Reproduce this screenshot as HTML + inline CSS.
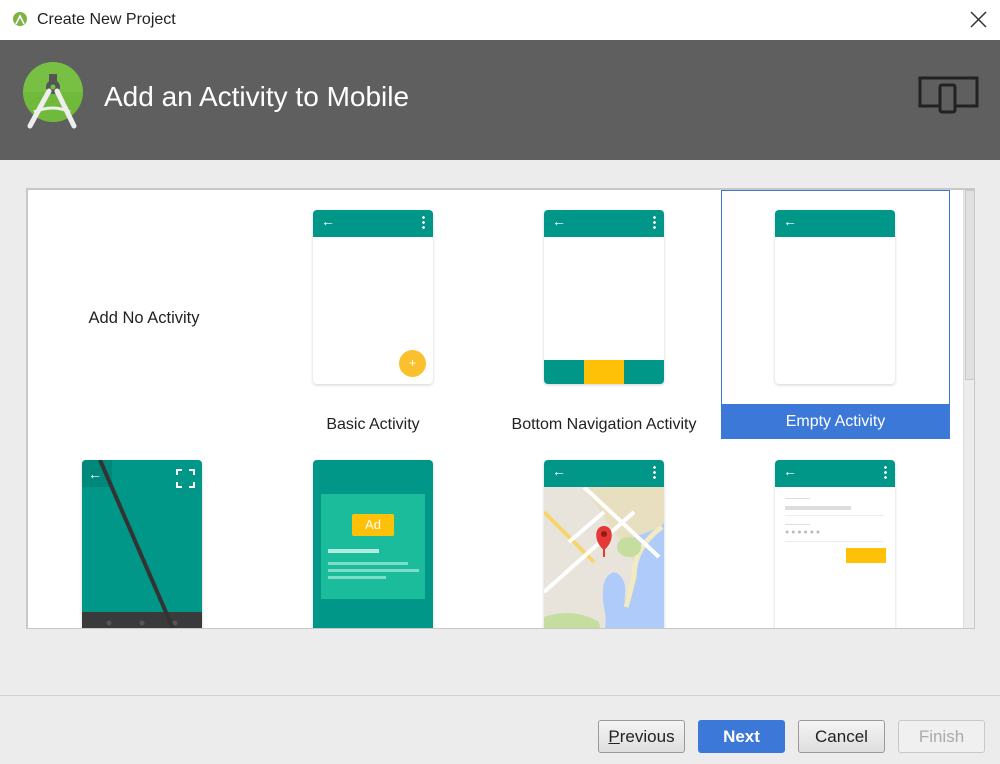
<!DOCTYPE html>
<html><head><meta charset="utf-8"><style>
*{margin:0;padding:0;box-sizing:border-box}
body{width:1000px;height:764px;background:#ececec;font-family:"Liberation Sans",sans-serif;position:relative;overflow:hidden}
.abs{position:absolute}
.title{left:0;top:0;width:1000px;height:40px;background:#fff}
.hdr{left:0;top:40px;width:1000px;height:120px;background:#5f5f5f}
.panel{left:26px;top:188px;width:949px;height:441px;background:#fff;border:2px solid #c8c8c8;border-right-width:1px;border-bottom-width:1px;overflow:hidden}
.ph{position:absolute;width:120px;background:#fff;border-radius:4px;box-shadow:0 1px 3px rgba(0,0,0,.18);overflow:hidden}
.bar{height:27px;background:#009688;position:relative}
.lbl{position:absolute;font-size:16px;color:#222;text-align:center}
.btn{position:absolute;top:720px;height:33px;width:87px;border:1px solid #9a9a9a;border-radius:3px;background:linear-gradient(#f4f4f4,#dedede);font-size:17px;text-align:center;line-height:31px;color:#222}
</style></head><body>
<div class="abs title">
<svg class="abs" style="left:12px;top:11px" width="16" height="16"><circle cx="8" cy="8" r="7" fill="#7cb342"/><path d="M4 13 L8 5 L12 13" stroke="#fff" stroke-width="1.6" fill="none"/></svg>
<div class="abs" style="left:37px;top:11px;font-size:16px;color:#222">Create New Project</div>
<svg class="abs" style="left:970px;top:11px" width="17" height="17"><path d="M1 1L16 16M16 1L1 16" stroke="#333" stroke-width="1.5"/></svg>
</div>
<div class="abs hdr">
<svg class="abs" style="left:20px;top:20px" width="66" height="72">
<circle cx="33" cy="32" r="30" fill="#78c043"/>
<path d="M3 32 A30 30 0 0 0 63 32 Z" fill="#6ab437" opacity=".6"/>
<rect x="29" y="14" width="8" height="8" fill="#555"/>
<circle cx="33" cy="27" r="7" fill="#555"/><circle cx="33" cy="27" r="2.5" fill="#78c043"/>
<path d="M29 31 L10 66 M37 31 L54 66" stroke="#eee" stroke-width="5" stroke-linecap="round"/>
<path d="M14 52 Q33 44 50 52" stroke="#eee" stroke-width="3" fill="none"/>
</svg>
<div class="abs" style="left:104px;top:41px;font-size:28px;color:#fff">Add an Activity to Mobile</div>
<svg class="abs" style="left:918px;top:35px" width="62" height="42"><rect x="2" y="3" width="57" height="28" fill="none" stroke="#222" stroke-width="3"/><rect x="22" y="10" width="15" height="27" rx="2" fill="#5f5f5f" stroke="#222" stroke-width="3"/></svg>
</div>

<div class="abs panel">
<div class="lbl" style="left:36px;top:119px;width:160px;font-size:16.5px">Add No Activity</div>

<div class="ph" style="left:285px;top:20px;height:174px"><div class="bar"><span style="position:absolute;left:8px;top:3px;color:#fff;font-size:14px">←</span><span style="position:absolute;right:8px;top:5px;width:3px;height:14px;background:radial-gradient(circle,#fff 1.3px,transparent 1.5px) 0 0/3px 5px"></span></div>
<div style="position:absolute;left:86px;top:140px;width:27px;height:27px;border-radius:50%;background:#fbc02d;color:#fff;font-size:12px;text-align:center;line-height:27px">+</div></div>
<div class="lbl" style="left:270px;top:226px;width:150px">Basic Activity</div>

<div class="ph" style="left:516px;top:20px;height:174px"><div class="bar"><span style="position:absolute;left:8px;top:3px;color:#fff;font-size:14px">←</span><span style="position:absolute;right:8px;top:5px;width:3px;height:14px;background:radial-gradient(circle,#fff 1.3px,transparent 1.5px) 0 0/3px 5px"></span></div>
<div style="position:absolute;left:0;bottom:0;width:120px;height:24px;background:#009688"></div><div style="position:absolute;left:40px;bottom:0;width:40px;height:24px;background:#ffc107"></div></div>
<div class="lbl" style="left:466px;top:226px;width:220px">Bottom Navigation Activity</div>

<div style="position:absolute;left:693px;top:0;width:229px;height:249px;border:1px solid #3c78d8"></div>
<div style="position:absolute;left:693px;top:214px;width:229px;height:35px;background:#3c78d8;color:#fff;font-size:16px;text-align:center;line-height:35px">Empty Activity</div>
<div class="ph" style="left:747px;top:20px;height:174px"><div class="bar"><span style="position:absolute;left:8px;top:3px;color:#fff;font-size:14px">←</span></div></div>

<div class="ph" style="left:54px;top:270px;height:180px;background:#009688;border-radius:4px 4px 0 0">
<svg width="120" height="180" style="position:absolute;left:0;top:0"><rect x="0" y="0" width="30" height="27" fill="#00897b"/><rect x="0" y="152" width="120" height="28" fill="#3a3a3a"/><circle cx="27" cy="163" r="2.5" fill="#555"/><circle cx="60" cy="163" r="2.5" fill="#555"/><circle cx="93" cy="163" r="2.5" fill="#555"/><path d="M18 0 L96 180" stroke="#333" stroke-width="4"/><text x="6" y="19" fill="#fff" font-size="14">←</text><path d="M95 15v-5h5M107 10h5v5M112 22v5h-5M100 27h-5v-5" stroke="#fff" stroke-width="2" fill="none"/></svg></div>

<div class="ph" style="left:285px;top:270px;height:180px;background:#009688;border-radius:4px 4px 0 0">
<div style="position:absolute;left:8px;top:34px;width:104px;height:105px;background:#1abc9c"></div>
<div style="position:absolute;left:39px;top:54px;width:42px;height:22px;background:#ffc107;color:#fff;font-size:13px;text-align:center;line-height:22px;border-radius:2px">Ad</div>
<div style="position:absolute;left:15px;top:89px;width:51px;height:4px;background:#b2ece0"></div>
<div style="position:absolute;left:15px;top:102px;width:80px;height:3px;background:#7fdcc8"></div>
<div style="position:absolute;left:15px;top:109px;width:91px;height:3px;background:#7fdcc8"></div>
<div style="position:absolute;left:15px;top:116px;width:58px;height:3px;background:#7fdcc8"></div></div>

<div class="ph" style="left:516px;top:270px;height:180px;border-radius:4px 4px 0 0">
<div class="bar"><span style="position:absolute;left:8px;top:3px;color:#fff;font-size:14px">←</span><span style="position:absolute;right:8px;top:5px;width:3px;height:14px;background:radial-gradient(circle,#fff 1.3px,transparent 1.5px) 0 0/3px 5px"></span></div>
<svg width="120" height="153" style="position:absolute;left:0;top:27px"><rect width="120" height="153" fill="#e8e4dc"/><path d="M40 0H120V60L90 75Z" fill="#e8dfc0"/><path d="M0 130 Q30 120 55 135 L60 160 H0Z" fill="#c5dea0"/><path d="M90 50 Q120 40 120 35 V160 H55 Q65 140 60 120 Q55 90 70 85 Q85 90 80 115 Q95 80 90 50Z" fill="#aecbfa"/><path d="M118 40 Q90 60 90 90 Q85 110 82 120" stroke="#f3eac2" stroke-width="5" fill="none"/><path d="M0 25 L50 75" stroke="#f7d56b" stroke-width="4"/><path d="M40 0 L115 70 M0 105 L90 25 M25 55 L60 25" stroke="#fff" stroke-width="4"/><ellipse cx="85" cy="60" rx="12" ry="10" fill="#c5dea0"/><path d="M60 62 C50 52 52 40 60 40 C68 40 70 52 60 62Z M60 62 L60 70" fill="#e53935" stroke="#e53935" stroke-width="2"/><circle cx="60" cy="47" r="3" fill="#8b1c1c"/></svg></div>

<div class="ph" style="left:747px;top:270px;height:180px;border-radius:4px 4px 0 0">
<div class="bar"><span style="position:absolute;left:8px;top:3px;color:#fff;font-size:14px">←</span><span style="position:absolute;right:8px;top:5px;width:3px;height:14px;background:radial-gradient(circle,#fff 1.3px,transparent 1.5px) 0 0/3px 5px"></span></div>
<div style="position:absolute;left:10px;top:38px;width:25px;height:1px;background:#ddd"></div>
<div style="position:absolute;left:10px;top:46px;width:66px;height:4px;background:#ddd"></div>
<div style="position:absolute;left:10px;top:55px;width:99px;height:1px;background:#eee"></div>
<div style="position:absolute;left:10px;top:64px;width:25px;height:1px;background:#ddd"></div>
<div style="position:absolute;left:10px;top:71px;width:40px;height:4px;color:#bbb;font-size:7px;line-height:4px">● ● ● ● ● ●</div>
<div style="position:absolute;left:10px;top:81px;width:99px;height:1px;background:#eee"></div>
<div style="position:absolute;left:71px;top:88px;width:40px;height:15px;background:#ffc107"></div></div>

<div style="position:absolute;left:935px;top:0;width:12px;height:440px;background:#ececec;border-left:1px solid #ddd"><div style="position:absolute;left:1px;top:0;width:10px;height:190px;background:#e0e0e0;border:1px solid #c8c8c8"></div></div>
</div>

<div class="abs" style="left:0;top:695px;width:1000px;height:1px;background:#d0d0d0"></div>
<div class="btn" style="left:598px"><u>P</u>revious</div>
<div class="btn" style="left:698px;background:#3c78d8;border-color:#3c78d8;color:#fff;font-weight:bold">Next</div>
<div class="btn" style="left:798px">Cancel</div>
<div class="btn" style="left:898px;background:#f0f0f0;border-color:#c8c8c8;color:#aaa">Finish</div>
</body></html>
